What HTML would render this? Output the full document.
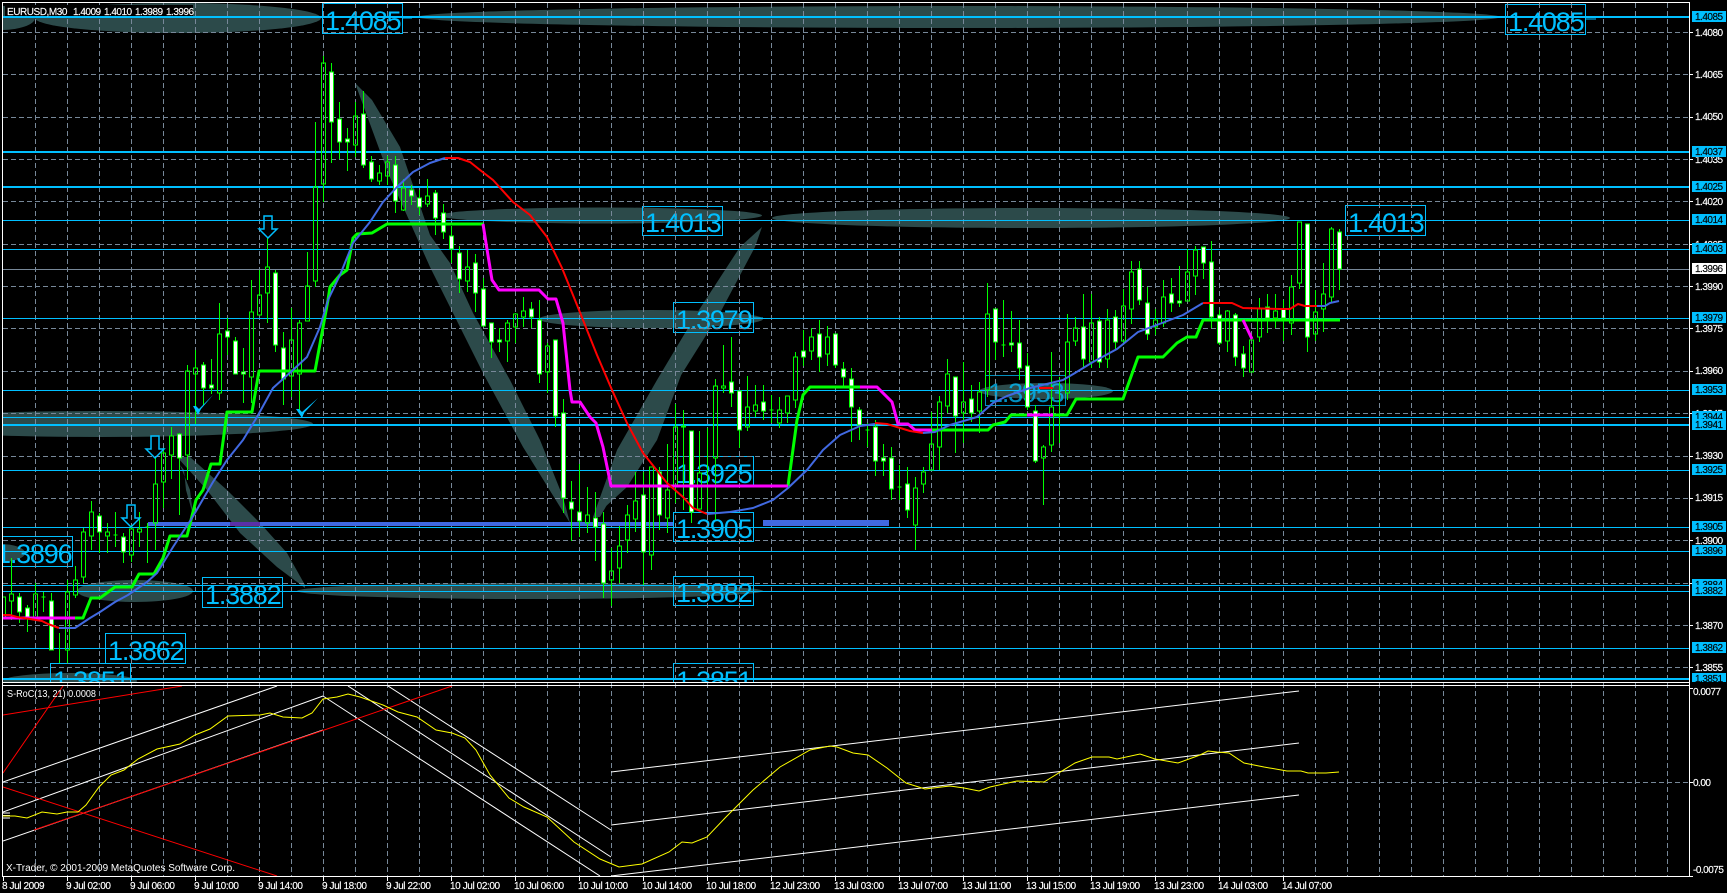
<!DOCTYPE html>
<html>
<head>
<meta charset="utf-8">
<title>EURUSD,M30</title>
<style>
html,body{margin:0;padding:0;background:#000;width:1727px;height:893px;overflow:hidden}
svg{display:block}
text{font-family:"Liberation Sans",sans-serif}
.a{font-size:10px;letter-spacing:-.5px;fill:#fff;stroke:#fff;stroke-width:.15}
.k{font-size:10px;letter-spacing:-.5px;fill:#000;stroke:#000;stroke-width:.15}
.t{font-size:10px;letter-spacing:-.4px;fill:#fff;stroke:#fff;stroke-width:.15}
.b{font-size:27px;letter-spacing:-1.2px;fill:#00bfff}
.bx{fill:none;stroke:#00bfff;stroke-width:1}
</style>
</head>
<body>
<svg width="1727" height="893" viewBox="0 0 1727 893" xmlns="http://www.w3.org/2000/svg">
<defs>
<clipPath id="m"><rect x="3" y="3" width="1686" height="679"/></clipPath>
<clipPath id="p"><rect x="3" y="686" width="1686" height="190"/></clipPath>
<pattern id="v" patternUnits="userSpaceOnUse" x="35" y="3" width="32" height="8"><rect x="0" y="0" width="1" height="5" fill="#778899"/></pattern>
</defs>
<rect width="1727" height="893" fill="#000"/>

<g clip-path="url(#m)">
<g fill="#2c4a4a">
<ellipse cx="0" cy="18" rx="35" ry="12"/>
<ellipse cx="178" cy="18" rx="143" ry="15"/>
<ellipse cx="959" cy="17" rx="541" ry="11"/>
<ellipse cx="601" cy="215.5" rx="161" ry="8"/>
<ellipse cx="1031" cy="218" rx="259" ry="10"/>
<ellipse cx="651" cy="319" rx="112" ry="9"/>
<ellipse cx="1046" cy="391" rx="67" ry="8"/>
<ellipse cx="100" cy="424" rx="213" ry="13"/>
<ellipse cx="135" cy="591" rx="58" ry="11"/>
<ellipse cx="530" cy="591" rx="233" ry="8"/>
<ellipse cx="0" cy="553" rx="25" ry="9"/>
<ellipse cx="70" cy="681" rx="67" ry="8"/>
<path d="M355 83L388 173L430 267L483 373L523 447L570 523L563 497L540 440L510 380L473 313L450 263L430 235L400 147L372 100Z"/>
<path d="M593 517L617 450L657 380L697 313L740 247L762 227L755 247L720 313L678 380L640 447L600 517Z"/>
<path d="M597 513L630 447L670 377L690 330L693 337L683 370L657 440L627 487L593 518Z"/>
<path d="M177 457L207 490L240 533L277 567L305 588L305 585L287 553L260 523L227 490L190 457Z"/>
<path d="M180 465L190 490L193 515L186 490L184 470Z"/>
</g>

<g shape-rendering="crispEdges">
<g class="bx">
<rect x="322.5" y="3.5" width="80" height="30"/>
<rect x="1505.5" y="4.5" width="80" height="30"/>
<rect x="642.5" y="206.5" width="80" height="29"/>
<rect x="1345.5" y="205.5" width="80" height="30"/>
<rect x="673.5" y="302.5" width="80" height="30"/>
<rect x="673.5" y="456.5" width="80" height="30"/>
<rect x="673.5" y="512.5" width="80" height="29"/>
<rect x="673.5" y="576.5" width="80" height="29"/>
<rect x="985.5" y="375.5" width="80" height="30" opacity=".75"/>
<rect x="-7.5" y="536.5" width="80" height="30"/>
<rect x="202.5" y="577.5" width="80" height="30"/>
<rect x="105.5" y="633.5" width="80" height="30"/>
<rect x="50.5" y="663.5" width="80" height="30"/>
<rect x="673.5" y="663.5" width="80" height="30"/>
</g>
<path d="M402 18H412M1586 19H1596M753 318H763" stroke="#00bfff"/>
</g>
<text class="b" x="325" y="30">1.4085</text>
<text class="b" x="1508" y="31">1.4085</text>
<text class="b" x="645" y="232">1.4013</text>
<text class="b" x="1348" y="232">1.4013</text>
<text class="b" x="676" y="329">1.3979</text>
<text class="b" x="676" y="483">1.3925</text>
<text class="b" x="676" y="538">1.3905</text>
<text class="b" x="676" y="602">1.3882</text>
<text class="b" x="988" y="402" opacity=".75">1.3953</text>
<text class="b" x="-4" y="563">1.3896</text>
<text class="b" x="205" y="604">1.3882</text>
<text class="b" x="108" y="660">1.3862</text>
<text class="b" x="53" y="690">1.3851</text>
<text class="b" x="676" y="690">1.3851</text>
</g>

<g shape-rendering="crispEdges">
<rect x="35" y="3" width="1633" height="873" fill="url(#v)"/>
<path fill="none" stroke="#778899" stroke-dasharray="5 3" d="M3 32.5H1689M3 74.5H1689M3 117.5H1689M3 159.5H1689M3 201.5H1689M3 244.5H1689M3 286.5H1689M3 328.5H1689M3 371.5H1689M3 413.5H1689M3 456.5H1689M3 498.5H1689M3 540.5H1689M3 583.5H1689M3 625.5H1689M3 667.5H1689M3 782.5H1689"/>
</g>

<g clip-path="url(#m)" shape-rendering="crispEdges">
<path stroke="#00bfff" stroke-width="2" fill="none" d="M3 17H1689M3 152H1689M3 187H1689M3 425H1689M3 679H1689"/>
<path stroke="#00bfff" stroke-width="1" fill="none" d="M3 220.5H1689M3 249.5H1689M3 318.5H1689M3 390.5H1689M3 417.5H1689M3 470.5H1689M3 527.5H1689M3 551.5H1689M3 585.5H1689M3 591.5H1689M3 648.5H1689"/>
<path stroke="#778899" stroke-width="1" fill="none" d="M3 269.5H1689"/>
<rect x="148" y="522" width="525" height="4" fill="#4169e1"/>
<rect x="230" y="522" width="30" height="4" fill="#5a30a8"/>
<rect x="763" y="520" width="126" height="6" fill="#4169e1"/>
</g>

<rect x="5" y="5" width="188" height="11" fill="#000"/>

<g clip-path="url(#m)" shape-rendering="crispEdges">
<path fill="none" stroke="#00ff00" stroke-width="1" d="M11.5 558V594M11.5 601V620M19.5 593V623M27.5 605V632M35.5 583V594M35.5 618V620M43.5 592V612M41.5 597h4M51.5 593V650M59.5 633V663M67.5 580V592M67.5 650V663M75.5 566V580M75.5 595V598M83.5 528V532M83.5 577V583M91.5 501V512M91.5 536V550M99.5 513V553M107.5 523V532M107.5 536V553M115.5 512V547M113.5 535h4M123.5 533V563M131.5 525V529M131.5 555V562M139.5 512V529M139.5 532V547M147.5 523V563M145.5 527h4M155.5 457V484M155.5 523V550M163.5 448V453M163.5 482V508M171.5 427V436M171.5 455V479M179.5 433V515M187.5 365V371M187.5 455V480M195.5 350V368M195.5 374V424M203.5 362V405M211.5 359V394M219.5 303V334M219.5 393V400M227.5 318V355M235.5 337V374M243.5 348V403M251.5 280V312M251.5 377V403M259.5 270V295M267.5 237V267M267.5 293V323M275.5 270V352M283.5 332V405M291.5 308V340M291.5 376V397M299.5 320V323M299.5 374V410M307.5 252V286M315.5 122V187M315.5 281V287M323.5 56V63M323.5 184V202M331.5 63V163M339.5 102V159M347.5 128V171M355.5 102V116M355.5 145V157M363.5 91V168M371.5 156V182M379.5 165V173M379.5 181V185M387.5 156V162M387.5 176V185M395.5 156V213M403.5 179V188M403.5 210V211M411.5 185V205M419.5 190V215M427.5 179V196M427.5 204V207"/>
<path fill="none" stroke="#00ff00" stroke-width="1" d="M435.5 190V235M443.5 204V239M451.5 226V263M459.5 246V293M467.5 250V267M467.5 281V292M475.5 254V312M483.5 278V326M491.5 323V358M499.5 328V352M507.5 320V323M507.5 341V362M515.5 313V314M515.5 327V343M523.5 297V311M523.5 317V327M531.5 302V328M539.5 300V383M547.5 343V346M547.5 372V393M555.5 340V427M563.5 399V513M571.5 481V541M579.5 464V537M587.5 487V515M587.5 523V533M595.5 492V561M603.5 512V598M611.5 548V571M611.5 580V606M619.5 526V546M619.5 568V583M627.5 505V515M627.5 540V553M635.5 472V501M635.5 519V532M643.5 472V585M651.5 555V570M659.5 467V530M667.5 444V490M667.5 518V533M675.5 404V427M675.5 485V503M683.5 410V510M691.5 431V523M699.5 431V473M707.5 428V510M715.5 379V386M715.5 458V520M723.5 345V386M723.5 388V393M731.5 337V407M739.5 391V448M747.5 376V407M747.5 427V431M755.5 385V405M755.5 411V417M763.5 385V420M771.5 395V423M769.5 410h4M779.5 397V410M779.5 423V428M787.5 413V423M795.5 352V357M795.5 400V408M803.5 330V366M811.5 328V337M811.5 351V360M819.5 320V372M827.5 326V337M827.5 354V366M835.5 334V368M843.5 362V387M851.5 368V442M859.5 407V440M867.5 423V447M865.5 430h4M875.5 420V476M883.5 444V476M891.5 447V500M899.5 465V500M897.5 487h4M907.5 467V518M915.5 477V488M915.5 525V550M923.5 467V472M923.5 484V493M931.5 412V444M939.5 396V402M939.5 447V470M947.5 359V374M947.5 406V413M955.5 377V453M963.5 362V402M963.5 413V443M971.5 385V422M979.5 382V392M979.5 411V433M987.5 283V314M987.5 390V397M995.5 309V360M1003.5 300V357M1001.5 345h4M1011.5 311V352M1019.5 320V380M1027.5 353V410M1035.5 405V463M1043.5 445V447M1043.5 458V505M1051.5 352V407M1051.5 445V452M1059.5 377V443M1057.5 415h4M1067.5 314V342M1067.5 393V400M1075.5 317V328M1075.5 341V346M1083.5 294V368M1091.5 294V323M1091.5 362V368M1099.5 317V368M1107.5 309V320M1107.5 359V368M1115.5 310V350M1123.5 289V306M1123.5 341V345M1131.5 261V272M1131.5 309V324M1139.5 261V305M1147.5 287V340M1155.5 309V320M1155.5 327V335M1163.5 280V297M1163.5 323V327M1171.5 278V312M1179.5 266V307M1187.5 249V272M1195.5 246V250M1195.5 276V295M1203.5 247V279M1211.5 241V328M1219.5 310V345M1227.5 310V311M1227.5 341V352M1235.5 313V366M1243.5 346V377M1259.5 298V309M1259.5 337V342M1267.5 294V333M1275.5 294V311M1275.5 318V328M1283.5 300V341M1291.5 275V287M1291.5 323V335M1299.5 283V289M1307.5 224V352M1315.5 290V312M1315.5 334V341M1323.5 263V294M1323.5 309V332M1331.5 227V229M1331.5 297V302M1339.5 229V290"/>
<path fill="none" stroke="#00ff00" stroke-width="1" d="M1.5 597h4v20h-4zM9.5 594h4v7h-4zM33.5 594h4v24h-4zM65.5 592h4v58h-4zM73.5 580h4v15h-4zM81.5 532h4v45h-4zM89.5 512h4v24h-4zM105.5 532h4v4h-4zM129.5 529h4v26h-4zM137.5 529h4v3h-4zM153.5 484h4v39h-4zM161.5 453h4v29h-4zM169.5 436h4v19h-4zM185.5 371h4v84h-4zM193.5 368h4v6h-4zM217.5 334h4v59h-4zM249.5 312h4v65h-4zM257.5 295h4v20h-4zM265.5 267h4v26h-4zM289.5 340h4v36h-4zM297.5 323h4v51h-4zM305.5 286h4v35h-4zM313.5 187h4v94h-4zM321.5 63h4v121h-4zM353.5 116h4v29h-4zM377.5 173h4v8h-4zM385.5 162h4v14h-4zM401.5 188h4v22h-4zM425.5 196h4v8h-4zM465.5 267h4v14h-4zM505.5 323h4v18h-4zM513.5 314h4v13h-4zM521.5 311h4v6h-4zM545.5 346h4v26h-4zM585.5 515h4v8h-4zM609.5 571h4v9h-4zM617.5 546h4v22h-4zM625.5 515h4v25h-4zM633.5 501h4v18h-4zM649.5 467h4v88h-4zM665.5 490h4v28h-4zM673.5 427h4v58h-4zM697.5 473h4v36h-4zM713.5 386h4v72h-4zM721.5 386h4v2h-4zM745.5 407h4v20h-4zM753.5 405h4v6h-4zM777.5 410h4v13h-4zM785.5 396h4v17h-4zM793.5 357h4v43h-4zM809.5 337h4v14h-4zM825.5 337h4v17h-4zM913.5 488h4v37h-4zM921.5 472h4v12h-4zM929.5 444h4v26h-4zM937.5 402h4v45h-4zM945.5 374h4v32h-4zM961.5 402h4v11h-4zM977.5 392h4v19h-4zM985.5 314h4v76h-4zM1041.5 447h4v11h-4zM1049.5 407h4v38h-4zM1065.5 342h4v51h-4zM1073.5 328h4v13h-4zM1089.5 323h4v39h-4zM1105.5 320h4v39h-4zM1121.5 306h4v35h-4zM1129.5 272h4v37h-4zM1153.5 320h4v7h-4zM1161.5 297h4v26h-4zM1185.5 272h4v29h-4zM1193.5 250h4v26h-4zM1225.5 311h4v30h-4zM1249.5 340h4v32h-4zM1257.5 309h4v28h-4zM1273.5 311h4v7h-4zM1289.5 287h4v36h-4zM1297.5 222h4v61h-4zM1313.5 312h4v22h-4zM1321.5 294h4v15h-4zM1329.5 229h4v68h-4z"/>
<path fill="#fff" stroke="#00ff00" stroke-width="1" d="M17.5 597h4v15h-4zM25.5 608h4v10h-4zM49.5 601h4v49h-4zM97.5 516h4v16h-4zM121.5 537h4v15h-4zM177.5 434h4v24h-4zM201.5 365h4v23h-4zM209.5 385h4v3h-4zM225.5 331h4v6h-4zM233.5 341h4v33h-4zM241.5 372h4v2h-4zM273.5 273h4v72h-4zM281.5 348h4v31h-4zM329.5 72h4v50h-4zM337.5 119h4v23h-4zM345.5 139h4v3h-4zM361.5 114h4v51h-4zM369.5 162h4v17h-4zM393.5 165h4v36h-4zM409.5 190h4v6h-4zM417.5 198h4v9h-4zM433.5 193h4v25h-4zM441.5 213h4v19h-4zM449.5 236h4v13h-4zM457.5 253h4v26h-4zM473.5 263h4v30h-4zM481.5 289h4v37h-4zM489.5 323h4v19h-4zM497.5 340h4v2h-4zM529.5 309h4v8h-4zM537.5 320h4v54h-4zM553.5 340h4v76h-4zM561.5 413h4v85h-4zM569.5 502h4v7h-4zM577.5 512h4v9h-4zM593.5 518h4v9h-4zM601.5 524h4v59h-4zM641.5 495h4v57h-4zM657.5 472h4v43h-4zM681.5 426h4v1h-4zM689.5 431h4v81h-4zM729.5 382h4v11h-4zM737.5 391h4v39h-4zM761.5 402h4v9h-4zM801.5 351h4v6h-4zM817.5 334h4v23h-4zM833.5 334h4v31h-4zM841.5 369h4v8h-4zM849.5 379h4v28h-4zM857.5 410h4v15h-4zM873.5 427h4v34h-4zM881.5 458h4v3h-4zM889.5 458h4v31h-4zM905.5 484h4v26h-4zM953.5 377h4v39h-4zM969.5 399h4v14h-4zM993.5 309h4v33h-4zM1009.5 343h4v2h-4zM1017.5 343h4v25h-4zM1025.5 366h4v41h-4zM1033.5 411h4v50h-4zM1081.5 327h4v32h-4zM1097.5 321h4v41h-4zM1113.5 317h4v25h-4zM1137.5 269h4v31h-4zM1145.5 303h4v31h-4zM1169.5 294h4v9h-4zM1177.5 301h4v2h-4zM1201.5 247h4v16h-4zM1209.5 262h4v55h-4zM1217.5 315h4v28h-4zM1233.5 315h4v42h-4zM1241.5 354h4v14h-4zM1265.5 307h4v11h-4zM1281.5 309h4v9h-4zM1305.5 224h4v113h-4zM1337.5 232h4v37h-4z"/>
</g>

<g clip-path="url(#m)" fill="none" stroke-linejoin="round">
<path stroke="#00ff00" stroke-width="3" d="M75 618L83 618L91 598L100 598L115 587L132 587L139 574L154 574L163 558L170 536L187 536L196 500L203 490L211 464L220 464L227 412L252 412L259 371L315 371L328 300L330 287L340 275L347 270L353 238L357 234L372 233L387 224L483 224"/>
<path stroke="#00ff00" stroke-width="3" d="M788 486L797 420L803 395L810 387L860 387"/>
<path stroke="#00ff00" stroke-width="3" d="M932 430L988 430L993 425L1005 422L1011 415L1067 415L1076 399L1123 399L1138 357L1163 357L1177 343L1187 337L1196 337L1203 320L1340 320"/>
<path stroke="#ff00ff" stroke-width="3" d="M3 618H75"/>
<path stroke="#ff00ff" stroke-width="3" d="M483 224L486 243L492 280L499 290L539 290L548 299L556 299L563 323L570 390L572 402L580 402L590 417L596 423L603 447L611 486L788 486"/>
<path stroke="#ff00ff" stroke-width="3" d="M860 387L877 387L892 402L898 424L908 424L915 430L932 430"/>
<path stroke="#ff00ff" stroke-width="3" d="M1027 415H1053"/>
<path stroke="#ff00ff" stroke-width="3" d="M1243 320L1252 339"/>
<path stroke="#4169e1" stroke-width="2" d="M59 628L75 628L90 618L100 612L115 602L128 595L147 582L157 573L173 547L192 518L213 482L227 460L243 440L257 417L273 388L293 370L307 357L320 327L328 300L340 275L353 243L370 222L383 202L397 187L413 172L430 163L445 158"/>
<path stroke="#ff0000" stroke-width="2" d="M3 615L10 615L17 617L30 619L42 621L48 624L59 628"/>
<path stroke="#ff0000" stroke-width="2" d="M445 158L458 158L470 162L480 170L493 180L513 202L530 215L547 237L562 268L577 305L597 355L612 390L627 423L643 453L667 483L683 497L693 508L707 514"/>
<path stroke="#4169e1" stroke-width="2" d="M707 514L730 512L753 508L773 500L788 488L807 470L823 450L840 435L860 426L875 424"/>
<path stroke="#ff0000" stroke-width="2" d="M875 423L887 424L897 427L910 431L923 433"/>
<path stroke="#4169e1" stroke-width="2" d="M923 433L935 432L950 425L977 417L993 403L1007 396L1030 388L1063 380L1075 373L1093 362L1117 349L1138 332L1162 323L1183 315L1203 303"/>
<path stroke="#ff0000" stroke-width="2" d="M1203 303L1232 303L1243 308L1280 309L1290 309L1298 304L1305 306L1317 306"/>
<path stroke="#4169e1" stroke-width="2" d="M1317 306L1325 306L1330 303L1339 301"/>
<path stroke="#ff0000" stroke-width="2" d="M1039 388H1053"/>
</g>

<g fill="none" stroke="#00bfff" stroke-width="1.5">
<path d="M264 229V216H272V229H277L268 238L259 229H264Z"/>
<path d="M151 449V436H159V449H164L155 458L146 449H151Z"/>
<path d="M127 518V505H135V518H140L131 527L122 518H127Z"/>
</g>
<path fill="#00bfff" d="M193 406L196 406L199 409L213 395L201 409L198 415ZM296 409L299 409L302 412L318 398L304 413L302 418Z"/>

<text y="15" fill="#fff" stroke="#fff" stroke-width=".15" font-size="10"><tspan x="7" letter-spacing="-.45">EURUSD,M30</tspan><tspan x="73" letter-spacing="-.5">1.4009</tspan><tspan x="104" letter-spacing="-.5">1.4010</tspan><tspan x="135" letter-spacing="-.5">1.3989</tspan><tspan x="166" letter-spacing="-.5">1.3996</tspan></text>

<g clip-path="url(#p)" fill="none">
<g stroke="#ffffff" stroke-width="1">
<path d="M3 782L277 686M3 812L323 696M3 841L323 730"/>
<path d="M388 686L611 830M348 686L611 857M323 696L600 876"/>
<path d="M611 772L1299 691M611 825L1299 743M611 876L1299 795"/>
<path d="M3 813H10M3 815.5H10M3 818H10"/>
</g>
<g stroke="#ff0000" stroke-width="1">
<path d="M3 715L182 686M3 773L63 686M34 830L452 686M3 787L277 876"/>
</g>
<path stroke="#ffff00" stroke-width="1" d="M3 816L15 816L27 818L42 812L57 814L67 812L78 812L86 805L99 787L111 775L124 770L138 759L157 749L180 744L195 735L210 729L228 716L260 715L270 713L283 717L302 718L312 713L323 699L337 697L348 694L360 697L383 705L398 712L417 717L436 730L452 733L465 738L476 750L490 775L509 798L524 807L547 817L574 842L600 859L619 867L642 864L669 852L682 842L692 843L707 837L726 817L753 790L780 767L810 750L830 746L837 747L853 753L868 755L887 768L906 783L925 789L950 786L964 788L979 791L990 787L1017 781L1044 782L1075 763L1092 757L1109 757L1117 759L1140 754L1155 759L1178 763L1200 755L1208 751L1217 752L1229 753L1244 763L1264 767L1287 771L1301 771L1308 773L1326 773L1339 772"/>
</g>
<text x="7" y="697" fill="#fff" font-size="10" textLength="89" lengthAdjust="spacingAndGlyphs">S-RoC(13, 21) 0.0008</text>
<text x="6" y="871" fill="#fff" font-size="10" textLength="229" lengthAdjust="spacingAndGlyphs">X-Trader, © 2001-2009 MetaQuotes Software Corp.</text>

<g shape-rendering="crispEdges" stroke="#fff" fill="none">
<path d="M2.5 2V877M2 2.5H1690M1689.5 2V877M2 682.5H1690M2 685.5H1690M2 876.5H1690"/>
<path d="M1690 32.5h3M1690 74.5h3M1690 117.5h3M1690 159.5h3M1690 201.5h3M1690 244.5h3M1690 286.5h3M1690 328.5h3M1690 371.5h3M1690 413.5h3M1690 456.5h3M1690 498.5h3M1690 540.5h3M1690 583.5h3M1690 625.5h3M1690 667.5h3M1690 688.5h3M1690 782.5h3M1690 876.5h3"/>
<path d="M3.5 877v4M67.5 877v4M131.5 877v4M195.5 877v4M259.5 877v4M323.5 877v4M387.5 877v4M451.5 877v4M515.5 877v4M579.5 877v4M643.5 877v4M707.5 877v4M771.5 877v4M835.5 877v4M899.5 877v4M963.5 877v4M1027.5 877v4M1091.5 877v4M1155.5 877v4M1219.5 877v4M1283.5 877v4"/>
</g>

<g>
<text class="a" x="1695" y="36">1.4080</text>
<text class="a" x="1695" y="78">1.4065</text>
<text class="a" x="1695" y="120">1.4050</text>
<text class="a" x="1695" y="163">1.4035</text>
<text class="a" x="1695" y="205">1.4020</text>
<text class="a" x="1695" y="248">1.4005</text>
<text class="a" x="1695" y="290">1.3990</text>
<text class="a" x="1695" y="332">1.3975</text>
<text class="a" x="1695" y="374">1.3960</text>
<text class="a" x="1695" y="417">1.3945</text>
<text class="a" x="1695" y="459">1.3930</text>
<text class="a" x="1695" y="501">1.3915</text>
<text class="a" x="1695" y="544">1.3900</text>
<text class="a" x="1695" y="587">1.3885</text>
<text class="a" x="1695" y="629">1.3870</text>
<text class="a" x="1695" y="671">1.3855</text>
</g>

<g fill="#00bfff" shape-rendering="crispEdges">
<rect x="1692" y="11" width="34" height="11"/>
<rect x="1692" y="146" width="34" height="11"/>
<rect x="1692" y="181" width="34" height="11"/>
<rect x="1692" y="214" width="34" height="11"/>
<rect x="1692" y="243" width="34" height="11"/>
<rect x="1692" y="312" width="34" height="11"/>
<rect x="1692" y="384" width="34" height="11"/>
<rect x="1692" y="411" width="34" height="11"/>
<rect x="1692" y="464" width="34" height="11"/>
<rect x="1692" y="521" width="34" height="11"/>
<rect x="1692" y="545" width="34" height="11"/>
<rect x="1692" y="579" width="34" height="11"/>
<rect x="1692" y="642" width="34" height="11"/>
<rect x="1692" y="673" width="34" height="9"/>
<rect x="1692" y="263" width="34" height="11" fill="#fff"/>
</g>
<g>
<text class="k" x="1695" y="20">1.4085</text>
<text class="k" x="1695" y="155">1.4037</text>
<text class="k" x="1695" y="190">1.4025</text>
<text class="k" x="1695" y="223">1.4014</text>
<text class="k" x="1695" y="252">1.4003</text>
<text class="k" x="1695" y="272">1.3996</text>
<text class="k" x="1695" y="321">1.3979</text>
<text class="k" x="1695" y="393">1.3953</text>
<text class="k" x="1695" y="420">1.3944</text>
<text class="k" x="1695" y="473">1.3925</text>
<text class="k" x="1695" y="530">1.3905</text>
<text class="k" x="1695" y="554">1.3896</text>
<text class="k" x="1695" y="588">1.3884</text>
<text class="k" x="1695" y="651">1.3862</text>
<text class="k" x="1695" y="682">1.3851</text>
</g>
<rect x="1692" y="419" width="34" height="11" fill="#00bfff" shape-rendering="crispEdges"/>
<text class="k" x="1695" y="428">1.3941</text>
<rect x="1692" y="585" width="34" height="11" fill="#00bfff" shape-rendering="crispEdges"/>
<text class="k" x="1695" y="594">1.3882</text>

<text class="a" x="1693" y="695">0.0077</text>
<text class="a" x="1693" y="786">0.00</text>
<text class="a" x="1693" y="873">-0.0075</text>

<g>
<text class="t" x="2" y="889">8 Jul 2009</text>
<text class="t" x="66" y="889">9 Jul 02:00</text>
<text class="t" x="130" y="889">9 Jul 06:00</text>
<text class="t" x="194" y="889">9 Jul 10:00</text>
<text class="t" x="258" y="889">9 Jul 14:00</text>
<text class="t" x="322" y="889">9 Jul 18:00</text>
<text class="t" x="386" y="889">9 Jul 22:00</text>
<text class="t" x="450" y="889">10 Jul 02:00</text>
<text class="t" x="514" y="889">10 Jul 06:00</text>
<text class="t" x="578" y="889">10 Jul 10:00</text>
<text class="t" x="642" y="889">10 Jul 14:00</text>
<text class="t" x="706" y="889">10 Jul 18:00</text>
<text class="t" x="770" y="889">12 Jul 23:00</text>
<text class="t" x="834" y="889">13 Jul 03:00</text>
<text class="t" x="898" y="889">13 Jul 07:00</text>
<text class="t" x="962" y="889">13 Jul 11:00</text>
<text class="t" x="1026" y="889">13 Jul 15:00</text>
<text class="t" x="1090" y="889">13 Jul 19:00</text>
<text class="t" x="1154" y="889">13 Jul 23:00</text>
<text class="t" x="1218" y="889">14 Jul 03:00</text>
<text class="t" x="1282" y="889">14 Jul 07:00</text>
</g>
</svg>
</body>
</html>
